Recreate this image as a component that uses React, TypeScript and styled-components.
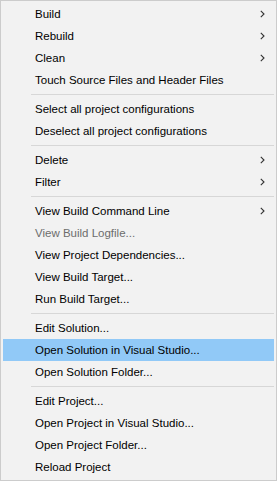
import styled, { createGlobalStyle } from "styled-components";

const Global = createGlobalStyle`
    html, body {
        margin: 0;
        padding: 0;
        background: #ffffff;
    }
`;

const Menu = styled.div`
    width: 277px;
    height: 481px;
    box-sizing: border-box;
    border: 1px solid #cccccc;
    background-color: #f2f2f2;
    padding: 2px;
    display: flex;
    flex-direction: column;
    font-family: "Segoe UI", "Liberation Sans", sans-serif;
    font-size: 11.5px;
`;

const Item = styled.div<{ $active?: boolean; $disabled?: boolean }>`
    height: 22px;
    display: flex;
    align-items: center;
    padding: 0 0 0 32px;
    background-color: ${(props) => (props.$active ? "#91c9f7" : "transparent")};
    color: ${(props) => (props.$disabled ? "#6d6d6d" : "#000000")};
    white-space: nowrap;
`;

const Label = styled.span`
    flex: 1;
`;

const Arrow = styled.span`
    width: 5px;
    height: 8px;
    margin-right: 9px;
    display: flex;
`;

const Separator = styled.div`
    height: 1px;
    margin: 3px 0 3px 28px;
    background-color: #d7d7d7;
`;

type Entry = { label: string; sub?: boolean; disabled?: boolean; active?: boolean } | "sep";

const entries: Entry[] = [
    { label: "Build", sub: true },
    { label: "Rebuild", sub: true },
    { label: "Clean", sub: true },
    { label: "Touch Source Files and Header Files" },
    "sep",
    { label: "Select all project configurations" },
    { label: "Deselect all project configurations" },
    "sep",
    { label: "Delete", sub: true },
    { label: "Filter", sub: true },
    "sep",
    { label: "View Build Command Line", sub: true },
    { label: "View Build Logfile...", disabled: true },
    { label: "View Project Dependencies..." },
    { label: "View Build Target..." },
    { label: "Run Build Target..." },
    "sep",
    { label: "Edit Solution..." },
    { label: "Open Solution in Visual Studio...", active: true },
    { label: "Open Solution Folder..." },
    "sep",
    { label: "Edit Project..." },
    { label: "Open Project in Visual Studio..." },
    { label: "Open Project Folder..." },
    { label: "Reload Project" },
];

const Chevron = () => (
    <svg width="5" height="8" viewBox="0 0 5 8">
        <path d="M0.8 0.8 L4 4 L0.8 7.2" fill="none" stroke="#333" strokeWidth="1.1" />
    </svg>
);

export default function App() {
    return (
        <>
            <Global />
            <Menu>
                {entries.map((e, i) =>
                    e === "sep" ? (
                        <Separator key={i} />
                    ) : (
                        <Item key={i} $active={e.active} $disabled={e.disabled}>
                            <Label>{e.label}</Label>
                            {e.sub && (
                                <Arrow>
                                    <Chevron />
                                </Arrow>
                            )}
                        </Item>
                    )
                )}
            </Menu>
        </>
    );
}
